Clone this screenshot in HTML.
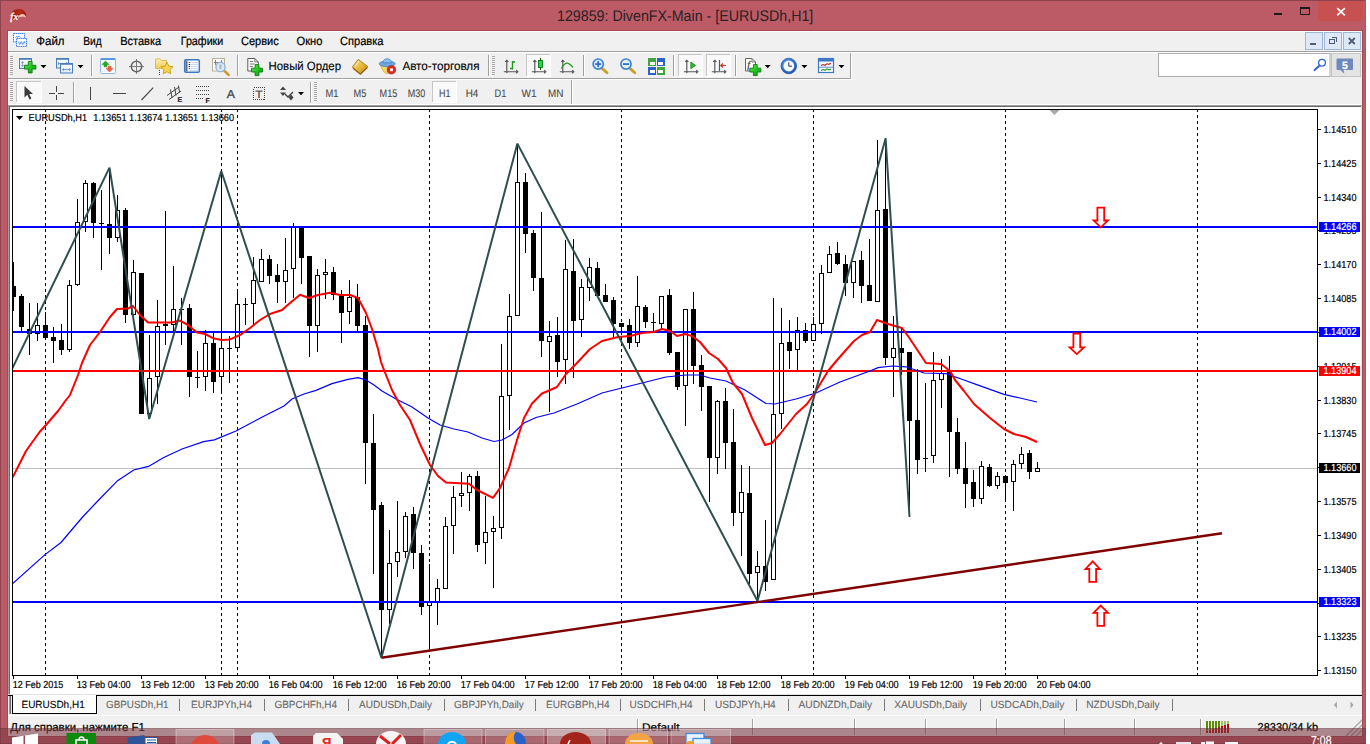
<!DOCTYPE html>
<html lang="ru"><head><meta charset="utf-8"><title>129859: DivenFX-Main - [EURUSDh,H1]</title>
<style>html,body{margin:0;padding:0;background:#fff;overflow:hidden}body{width:1370px;height:744px}svg{display:block;text-rendering:geometricPrecision;font-family:'Liberation Sans', sans-serif}</style>
</head><body>
<svg width="1370" height="744" viewBox="0 0 1370 744">
<rect x="0" y="0" width="1370" height="744" fill="#fff" />
<g id="window-frame" shape-rendering="crispEdges">
<rect x="0" y="0" width="1366" height="744" fill="#BC5A65" />
<rect x="0" y="0" width="1366" height="1" fill="#8F434D" />
<rect x="0" y="0" width="1" height="744" fill="#8F434D" />
<rect x="1365" y="0" width="1" height="744" fill="#B8505D" />
<rect x="7" y="30" width="1356" height="707" fill="#A64853" />
<rect x="8" y="31" width="1354" height="705" fill="#F0F0F0" />
<rect x="8" y="31" width="1354" height="1" fill="#fff" />
<rect x="8" y="31" width="1" height="20" fill="#fff" />
<rect x="1318" y="1" width="45" height="20" fill="#C75050" />
</g>
<g id="caption-buttons">
<rect x="1274" y="13" width="8" height="2" fill="#1a1a1a" shape-rendering="crispEdges"/>
<path d="M1300.5 8.5h9v6h-9z" fill="none" stroke="#1a1a1a" stroke-width="1"/>
<rect x="1300" y="7" width="10" height="2" fill="#1a1a1a" shape-rendering="crispEdges"/>
<path d="M1337.2 8.2l7.6 7.2M1344.8 8.2l-7.6 7.2" stroke="#fff" stroke-width="1.7" fill="none"/>
</g>
<text x="557" y="21" font-size="15.4" fill="#2a2226" text-anchor="start" font-weight="normal" textLength="256.3" lengthAdjust="spacingAndGlyphs" stroke="none">129859: DivenFX-Main - [EURUSDh,H1]</text>
<g id="app-icon">
<defs><radialGradient id="gapp" cx="0.55" cy="0.3" r="0.8"><stop offset="0" stop-color="#B8301C"/><stop offset="1" stop-color="#7E130D"/></radialGradient></defs>
<path d="M11.500 19.500C9.500 13.500 13.500 9 18.800 8.900C24 8.800 27.300 13 26 18C23.500 16 19.800 16.300 17 18.500C15 20 12.500 20.800 11.500 19.500Z" fill="url(#gapp)"/>
<path d="M18 16.800C20.500 13 25.600 13 26.200 18.200C24 16.400 21 16.400 18 18Z" fill="#F6D2CC" fill-opacity="0.900"/>
<text x="10.2" y="19.8" font-size="10.5" fill="#fff" text-anchor="start" font-weight="bold" textLength="8" lengthAdjust="spacingAndGlyphs" font-style="italic" font-family='"Liberation Serif", serif' stroke="#fff" stroke-width="0.2">fx</text>
</g>
<g id="menubar">
<g id="mdi-icon">
<rect x="13.5" y="33.5" width="11" height="8.5" fill="#fff" stroke="#3F86F0" stroke-width="1" stroke-dasharray="1.500 0.500"/>
<path d="M15.500 37.500l1.500-1.500M17 37.500l2-1.500 1.500 1.500" stroke="#3F86F0" stroke-width="0.900" fill="none"/>
<rect x="16.5" y="38.5" width="10" height="8" fill="#fff" stroke="#3F86F0" stroke-width="1" stroke-dasharray="1.500 0.500"/>
<path d="M18.500 41.500l1.200 3 1.500-3 1.500 3 1.500-3 .8 2" stroke="#3F86F0" stroke-width="0.900" fill="none"/>
</g>
<text x="36.3" y="45" font-size="12" fill="#000" text-anchor="start" font-weight="normal" textLength="28.2" lengthAdjust="spacingAndGlyphs"  stroke="#000" stroke-width="0.22">Файл</text>
<text x="83.3" y="45" font-size="12" fill="#000" text-anchor="start" font-weight="normal" textLength="18.4" lengthAdjust="spacingAndGlyphs"  stroke="#000" stroke-width="0.22">Вид</text>
<text x="120.2" y="45" font-size="12" fill="#000" text-anchor="start" font-weight="normal" textLength="41.0" lengthAdjust="spacingAndGlyphs"  stroke="#000" stroke-width="0.22">Вставка</text>
<text x="180.7" y="45" font-size="12" fill="#000" text-anchor="start" font-weight="normal" textLength="42.6" lengthAdjust="spacingAndGlyphs"  stroke="#000" stroke-width="0.22">Графики</text>
<text x="241" y="45" font-size="12" fill="#000" text-anchor="start" font-weight="normal" textLength="37.7" lengthAdjust="spacingAndGlyphs"  stroke="#000" stroke-width="0.22">Сервис</text>
<text x="296.5" y="45" font-size="12" fill="#000" text-anchor="start" font-weight="normal" textLength="25.9" lengthAdjust="spacingAndGlyphs"  stroke="#000" stroke-width="0.22">Окно</text>
<text x="340" y="45" font-size="12" fill="#000" text-anchor="start" font-weight="normal" textLength="43.5" lengthAdjust="spacingAndGlyphs"  stroke="#000" stroke-width="0.22">Справка</text>
<rect x="1305.5" y="32.5" width="17" height="17" fill="#DDE9F7" stroke="#9FB7D3" stroke-width="1"/>
<rect x="1324.5" y="32.5" width="17" height="17" fill="#DDE9F7" stroke="#9FB7D3" stroke-width="1"/>
<rect x="1343.5" y="32.5" width="17" height="17" fill="#DDE9F7" stroke="#9FB7D3" stroke-width="1"/>
<rect x="1310" y="43" width="6" height="2" fill="#4E5D73" shape-rendering="crispEdges"/>
<path d="M1331.5 37.5h5v4M1329.5 39.5h5v4h-5z" stroke="#4E5D73" stroke-width="1.4" fill="none" shape-rendering="crispEdges"/>
<path d="M1348.8 38l6 6M1354.8 38l-6 6" stroke="#4E5D73" stroke-width="1.8" fill="none"/>
</g>
<defs>
<linearGradient id="gplus" x1="0" y1="0" x2="1" y2="1"><stop offset="0" stop-color="#7BEA6A"/><stop offset="0.5" stop-color="#22C422"/><stop offset="1" stop-color="#0E9A12"/></linearGradient>
<linearGradient id="gfold" x1="0" y1="0" x2="0" y2="1"><stop offset="0" stop-color="#FDF0B4"/><stop offset="1" stop-color="#F0CB55"/></linearGradient>
<linearGradient id="gbook" x1="0" y1="0" x2="1" y2="1"><stop offset="0" stop-color="#F7DE8A"/><stop offset="0.5" stop-color="#E9B93B"/><stop offset="1" stop-color="#B98616"/></linearGradient>
<radialGradient id="gclock" cx="0.4" cy="0.35" r="0.7"><stop offset="0" stop-color="#5BA0F0"/><stop offset="1" stop-color="#1B55B5"/></radialGradient>
<linearGradient id="gwin" x1="0" y1="0" x2="0" y2="1"><stop offset="0" stop-color="#FFFFFF"/><stop offset="1" stop-color="#DCE8F8"/></linearGradient>
</defs>
<g id="toolbars">
<g shape-rendering="crispEdges">
<rect x="8" y="51" width="1354" height="1" fill="#A0A0A0" />
<rect x="8" y="52" width="1354" height="1" fill="#fff" />
<rect x="8" y="78" width="843" height="1" fill="#A0A0A0" />
<rect x="8" y="79" width="844" height="1" fill="#fff" />
<rect x="850" y="53" width="1" height="26" fill="#A0A0A0" />
<rect x="851" y="53" width="1" height="26" fill="#fff" />
<rect x="571" y="80" width="1" height="25" fill="#A0A0A0" />
<rect x="572" y="80" width="1" height="25" fill="#fff" />
</g>
<g shape-rendering="crispEdges"><rect x="10" y="56" width="3" height="1" fill="#A8A8A8" /><rect x="10" y="58" width="3" height="1" fill="#A8A8A8" /><rect x="10" y="60" width="3" height="1" fill="#A8A8A8" /><rect x="10" y="62" width="3" height="1" fill="#A8A8A8" /><rect x="10" y="64" width="3" height="1" fill="#A8A8A8" /><rect x="10" y="66" width="3" height="1" fill="#A8A8A8" /><rect x="10" y="68" width="3" height="1" fill="#A8A8A8" /><rect x="10" y="70" width="3" height="1" fill="#A8A8A8" /><rect x="10" y="72" width="3" height="1" fill="#A8A8A8" /><rect x="10" y="74" width="3" height="1" fill="#A8A8A8" /></g>
<g id="ico-newchart">
<rect x="19.5" y="58.5" width="12" height="10" fill="url(#gwin)" stroke="#4A7EBB" stroke-width="1"/>
<rect x="19.5" y="58.2" width="12" height="1.6" fill="#4A7EBB" />
<path d="M22.500 61.500v5M21.200 63l1.300-1.500 1.300 1.500M21.200 65l1.300 1.500 1.300-1.500" stroke="#6E93C4" stroke-width="0.800" fill="none"/>
<path d="M28.3 61.5h3.8v3.8000000000000003h3.8000000000000003v3.8h-3.8000000000000003v3.8000000000000003h-3.8v-3.8000000000000003h-3.8000000000000003v-3.8h3.8000000000000003z" fill="url(#gplus)" stroke="#0A7D0A" stroke-width="0.9" stroke-linejoin="round"/>
</g>
<path d="M40.5 65h6l-3 3.2z" fill="#000"/>
<g id="ico-profiles">
<rect x="56.5" y="58.5" width="12" height="9.5" fill="url(#gwin)" stroke="#4A7EBB" stroke-width="1"/>
<rect x="56.5" y="58.2" width="12" height="1.6" fill="#4A7EBB" />
<path d="M58.500 63.500h8M58.500 62v3M66.500 62v3" stroke="#6E93C4" stroke-width="0.900"/>
<rect x="60.5" y="63.5" width="12" height="9.5" fill="url(#gwin)" stroke="#4A7EBB" stroke-width="1"/>
<rect x="60.5" y="63.2" width="12" height="1.6" fill="#4A7EBB" />
<path d="M62.500 69.500h8M63.800 68.200l-1.300 1.300 1.300 1.300M69.200 68.200l1.300 1.300-1.300 1.300" stroke="#6E93C4" stroke-width="0.900" fill="none"/>
</g>
<path d="M77.5 65h6l-3 3.2z" fill="#000"/>
<g shape-rendering="crispEdges"><rect x="91" y="55" width="1" height="21" fill="#A0A0A0" /><rect x="92" y="55" width="1" height="21" fill="#fff" /></g>
<g id="ico-market">
<rect x="100.5" y="58.5" width="15" height="15" fill="#FDFEFF" stroke="#8DB8EA" stroke-width="1" rx="1.2"/>
<rect x="100.5" y="58.2" width="15" height="1.7" fill="#4F93E0" rx="0.8"/>
<path d="M109 62.500h5M109 65h5M102 69h4M102 71.500h4" stroke="#D5DCE6" stroke-width="0.800" stroke-dasharray="1 1"/>
<path d="M105.500 61l3.600 3.600h-2.100v2.200h-3v-2.200h-2.100z" fill="#22B022" stroke="#128212" stroke-width="0.500"/>
<path d="M109.600 72l3.600-3.600h-2.100v-2.200h-3v2.200h-2.100z" fill="#F0643C" stroke="#C8401E" stroke-width="0.500"/>
</g>
<g id="ico-cross" fill="none">
<path d="M136.500 59v15M129 66.500h15" stroke="#7b7b7b" stroke-width="1" shape-rendering="crispEdges"/>
<circle cx="136.500" cy="66.500" r="5.200" stroke="#666" stroke-width="1.500"/>
</g>
<g id="ico-navigator">
<path d="M155.500 60a1.200 1.200 0 0 1 1.200-1.200h3.300l1.500 1.700h5v8h-11z" fill="url(#gfold)" stroke="#D8B446" stroke-width="0.900"/>
<path d="M159.500 69.500v5" stroke="#444" stroke-width="1" stroke-dasharray="1 1" shape-rendering="crispEdges"/>
<path d="M167 62.300l1.900 3.900 4.200.500-3.100 2.900.8 4.200-3.800-2.100-3.800 2.100.8-4.200-3.100-2.900 4.200-.500z" fill="#F6D64E" stroke="#C79A1A" stroke-width="0.900" stroke-linejoin="round"/>
</g>
<g id="ico-terminal">
<rect x="184.7" y="59.7" width="14.6" height="12.6" fill="#fff" stroke="#3A78C3" stroke-width="1.500" rx="1.300"/>
<rect x="185.5" y="60.5" width="2" height="11" fill="#5A6E8C" />
<path d="M189.500 62.500h9M189.500 64.500h9M189.500 66.500h9M189.500 68.500h9M189.500 70.500h9" stroke="#B9D0F0" stroke-width="0.800"/>
<path d="M188.700 62.500h1.300M188.700 68.500h1.300" stroke="#E02020" stroke-width="1.100"/>
<path d="M188.700 64.500h1.300M188.700 66.500h1.300" stroke="#222" stroke-width="1.100"/>
</g>
<g id="ico-tester">
<rect x="212.5" y="58.5" width="12" height="12.5" fill="#FBFAF6" stroke="#B9B19A" stroke-width="1"/>
<path d="M215.500 60v5M221.500 60v5M214 62.500h9" stroke="#777" stroke-width="0.900"/>
<path d="M224.500 71l4.300 4" stroke="#C89B2B" stroke-width="2.400" stroke-linecap="round"/>
<circle cx="220.500" cy="67" r="4.600" fill="#D9E8F8" fill-opacity="0.9" stroke="#8FB4E0" stroke-width="1.400"/>
<rect x="219.3" y="64.5" width="2.2" height="4.5" fill="#A9B7C6" />
</g>
<g shape-rendering="crispEdges"><rect x="237" y="55" width="1" height="21" fill="#A0A0A0" /><rect x="238" y="55" width="1" height="21" fill="#fff" /></g>
<g id="ico-neworder">
<path d="M247.800 58.500h7l3.500 3.500v9h-10.500z" fill="#fff" stroke="#5a5a5a" stroke-width="1"/>
<path d="M254.800 58.500v3.500h3.500" fill="none" stroke="#5a5a5a" stroke-width="0.800"/>
<path d="M249.800 61.500h3.500M249.800 64h5M249.800 66.500h3" stroke="#777" stroke-width="1"/>
<path d="M255.1 64.6h3.8v3.6h3.6v3.8h-3.6v3.6h-3.8v-3.6h-3.6v-3.8h3.6z" fill="url(#gplus)" stroke="#0A7D0A" stroke-width="0.9" stroke-linejoin="round"/>
</g>
<text x="268.6" y="70.2" font-size="12" fill="#000" text-anchor="start" font-weight="normal" textLength="72.4" lengthAdjust="spacingAndGlyphs" stroke="#000" stroke-width="0.12">Новый Ордер</text>
<g id="ico-book">
<path d="M352.200 67.200l6-7.800 9.700 7.200-7.600 7.200z" fill="url(#gbook)" stroke="#A87B16" stroke-width="0.900" stroke-linejoin="round"/>
<path d="M353 68.300l7.400 6 7-6.800" fill="none" stroke="#8C6410" stroke-width="1.200"/>
<path d="M355 66.500l4-5" stroke="#FBEFC0" stroke-width="1.200"/>
</g>
<g id="ico-autotrade">
<path d="M380.500 65.500c2 5 4 8 6.500 8s4.500-3 6.500-8z" fill="#F6D662" stroke="#D0A92E" stroke-width="0.800"/>
<ellipse cx="387.200" cy="63.800" rx="8" ry="2.900" fill="#6FA8DF" stroke="#4884C4" stroke-width="0.800"/>
<path d="M382.800 62.800c.5-5.500 8.300-5.500 8.800 0z" fill="#8CC0EE" stroke="#4884C4" stroke-width="0.800"/>
<circle cx="391.500" cy="69.800" r="4.100" fill="#E22B1E" stroke="#A8150C" stroke-width="0.700"/>
<rect x="390.1" y="68.4" width="2.8" height="2.8" fill="#fff" />
</g>
<text x="402.4" y="70.2" font-size="12" fill="#000" text-anchor="start" font-weight="normal" textLength="77.1" lengthAdjust="spacingAndGlyphs" stroke="#000" stroke-width="0.12">Авто-торговля</text>
<g shape-rendering="crispEdges"><rect x="488" y="55" width="1" height="21" fill="#A0A0A0" /><rect x="489" y="55" width="1" height="21" fill="#fff" /></g>
<g shape-rendering="crispEdges"><rect x="492" y="56" width="3" height="1" fill="#A8A8A8" /><rect x="492" y="58" width="3" height="1" fill="#A8A8A8" /><rect x="492" y="60" width="3" height="1" fill="#A8A8A8" /><rect x="492" y="62" width="3" height="1" fill="#A8A8A8" /><rect x="492" y="64" width="3" height="1" fill="#A8A8A8" /><rect x="492" y="66" width="3" height="1" fill="#A8A8A8" /><rect x="492" y="68" width="3" height="1" fill="#A8A8A8" /><rect x="492" y="70" width="3" height="1" fill="#A8A8A8" /><rect x="492" y="72" width="3" height="1" fill="#A8A8A8" /><rect x="492" y="74" width="3" height="1" fill="#A8A8A8" /></g>
<path d="M506.8 60.2V73.3M503.8 71.7H517.8M505.2 61.8L506.8 60.2L508.40000000000003 61.8M516.2 70.10000000000001L517.8 71.7L516.2 73.3" stroke="#555" stroke-width="1.15" fill="none"/>
<path d="M512.500 61v8.500M512.500 62h2.500M510 68.500h2.500" stroke="#1F9A1F" stroke-width="1.400" fill="none"/>
<g shape-rendering="crispEdges"><rect x="526" y="54" width="25" height="23" fill="#F9F9F9"/><rect x="526" y="54" width="25" height="1" fill="#C6C6C6"/><rect x="526" y="54" width="1" height="23" fill="#C6C6C6"/><rect x="526" y="76" width="25" height="1" fill="#fff"/><rect x="550" y="54" width="1" height="23" fill="#fff"/></g>
<path d="M534.8 60.2V73.3M531.8 71.7H545.8M533.1999999999999 61.8L534.8 60.2L536.4 61.8M544.2 70.10000000000001L545.8 71.7L544.2 73.3" stroke="#555" stroke-width="1.15" fill="none"/>
<path d="M540.500 58v12" stroke="#0d5f0d" stroke-width="1.100"/>
<rect x="538.5" y="60.5" width="4" height="7" fill="#2ED053" stroke="#0B7A0B" stroke-width="0.900"/>
<path d="M562.8 60.2V73.3M559.8 71.7H573.8M561.1999999999999 61.8L562.8 60.2L564.4 61.8M572.2 70.10000000000001L573.8 71.7L572.2 73.3" stroke="#555" stroke-width="1.15" fill="none"/>
<path d="M561.300 68.500c2.200-3.800 4.200-5.300 5.900-5.300s3.400 1.700 5.700 4" stroke="#1F9A1F" stroke-width="1.300" fill="none"/>
<g shape-rendering="crispEdges"><rect x="583" y="55" width="1" height="21" fill="#A0A0A0" /><rect x="584" y="55" width="1" height="21" fill="#fff" /></g>
<g><path d="M602.4000000000001 68.600l4.600 4.200" stroke="#C9A02C" stroke-width="2.800" stroke-linecap="round"/>
<circle cx="598.2" cy="64.100" r="5.100" fill="#E1EEFB" stroke="#3B82D6" stroke-width="1.700"/>
<path d="M595.2 64.100h6" stroke="#2F6FCB" stroke-width="1.800"/>
<path d="M598.2 61.100v6" stroke="#2F6FCB" stroke-width="1.800"/>
</g>
<g><path d="M630.2 68.600l4.600 4.200" stroke="#C9A02C" stroke-width="2.800" stroke-linecap="round"/>
<circle cx="626" cy="64.100" r="5.100" fill="#E1EEFB" stroke="#3B82D6" stroke-width="1.700"/>
<path d="M623 64.100h6" stroke="#2F6FCB" stroke-width="1.800"/>
</g>
<g id="ico-tile" shape-rendering="crispEdges">
<rect x="648" y="58" width="8" height="8" fill="#3FA53F" />
<rect x="656.5" y="58" width="8" height="8" fill="#2E62C9" />
<rect x="648" y="66.5" width="8" height="8" fill="#2E62C9" />
<rect x="656.5" y="66.5" width="8" height="8" fill="#3FA53F" />
<rect x="649.5" y="61.5" width="5" height="3" fill="#fff" />
<rect x="658" y="61.5" width="5" height="3" fill="#fff" />
<rect x="649.5" y="70" width="5" height="3" fill="#fff" />
<rect x="658" y="70" width="5" height="3" fill="#fff" />
</g>
<g shape-rendering="crispEdges"><rect x="673" y="55" width="1" height="21" fill="#A0A0A0" /><rect x="674" y="55" width="1" height="21" fill="#fff" /></g>
<g shape-rendering="crispEdges"><rect x="678" y="54" width="25" height="23" fill="#F9F9F9"/><rect x="678" y="54" width="25" height="1" fill="#C6C6C6"/><rect x="678" y="54" width="1" height="23" fill="#C6C6C6"/><rect x="678" y="76" width="25" height="1" fill="#fff"/><rect x="702" y="54" width="1" height="23" fill="#fff"/></g>
<path d="M686.8 60.2V73.3M683.8 71.7H697.8M685.1999999999999 61.8L686.8 60.2L688.4 61.8M696.2 70.10000000000001L697.8 71.7L696.2 73.3" stroke="#555" stroke-width="1.15" fill="none"/>
<path d="M690.800 62l4.800 3.400-4.800 3.400z" fill="#2DBE2D" stroke="#0B7A0B" stroke-width="0.700"/>
<g shape-rendering="crispEdges"><rect x="706" y="54" width="25" height="23" fill="#F9F9F9"/><rect x="706" y="54" width="25" height="1" fill="#C6C6C6"/><rect x="706" y="54" width="1" height="23" fill="#C6C6C6"/><rect x="706" y="76" width="25" height="1" fill="#fff"/><rect x="730" y="54" width="1" height="23" fill="#fff"/></g>
<path d="M714.8 60.2V73.3M711.8 71.7H725.8M713.1999999999999 61.8L714.8 60.2L716.4 61.8M724.2 70.10000000000001L725.8 71.7L724.2 73.3" stroke="#555" stroke-width="1.15" fill="none"/>
<path d="M719.500 60v11" stroke="#2C5FA8" stroke-width="1.200"/>
<path d="M726 65.500h-5M723 63.500l-2.200 2 2.200 2" stroke="#C23A1A" stroke-width="1.200" fill="none"/>
<g shape-rendering="crispEdges"><rect x="735" y="55" width="1" height="21" fill="#A0A0A0" /><rect x="736" y="55" width="1" height="21" fill="#fff" /></g>
<g id="ico-ind">
<path d="M745.500 58.500h6.500l3.500 3.500v9h-10z" fill="#fff" stroke="#666" stroke-width="1"/>
<path d="M752 58.500v3.500h3.500" fill="none" stroke="#666" stroke-width="0.800"/>
<text x="747.3" y="68" font-size="10" fill="#333" text-anchor="start" font-weight="normal" font-style="italic" font-family='"Liberation Serif", serif' stroke="#333" stroke-width="0.2">f</text>
<path d="M753.4 64.6h3.8v3.6h3.6v3.8h-3.6v3.6h-3.8v-3.6h-3.6v-3.8h3.6z" fill="url(#gplus)" stroke="#0A7D0A" stroke-width="0.9" stroke-linejoin="round"/>
</g>
<path d="M764.7 65h6l-3 3.2z" fill="#000"/>
<g id="ico-clock">
<circle cx="788.800" cy="66" r="7.800" fill="url(#gclock)" stroke="#1C4F9C" stroke-width="0.700"/>
<circle cx="788.800" cy="66" r="5.400" fill="#F6FAFF"/>
<path d="M788.800 62.300v3.900h3.200" stroke="#333" stroke-width="1" fill="none"/>
</g>
<path d="M801.4 65h6l-3 3.2z" fill="#000"/>
<g id="ico-tpl">
<rect x="818.5" y="58.5" width="15" height="14" fill="#F7FAFE" stroke="#3C78C8" stroke-width="1.200"/>
<rect x="819" y="59" width="14" height="2.5" fill="#3C78C8" />
<path d="M821 65.500l2-1 2 .8 2-1.500 2 .5 2-1.200" stroke="#B3261B" stroke-width="1.100" fill="none"/>
<path d="M821 70.500l2-1 2 .8 2-1.500 2 1 2-.8" stroke="#1F9A1F" stroke-width="1.100" fill="none"/>
<path d="M819 67.200h14" stroke="#3C78C8" stroke-width="0.800"/>
</g>
<path d="M838.4 65h6l-3 3.2z" fill="#000"/>
<rect x="1158.5" y="53.5" width="171.5" height="23" fill="#fff" stroke="#ABADB3" stroke-width="1"/>
<circle cx="1322" cy="62.800" r="3.400" fill="#fff" stroke="#2F66C8" stroke-width="1.300"/>
<path d="M1319.600 65.500l-5 4.600" stroke="#2F66C8" stroke-width="2" stroke-linecap="round"/>
<rect x="1331.5" y="53.5" width="29" height="23" fill="#E4E4E4" stroke="#C4C4C4" stroke-width="1"/>
<path d="M1337.500 58.500h14.500a1 1 0 0 1 1 1v9.500a1 1 0 0 1-1 1h-8.500l.8 3.800-4-3.800h-2.800a1 1 0 0 1-1-1v-9.500a1 1 0 0 1 1-1z" fill="#6F89BA"/>
<text x="1345" y="68.5" font-size="10.5" fill="#fff" text-anchor="middle" font-weight="bold"  stroke="#fff" stroke-width="0.2">5</text>
<g shape-rendering="crispEdges"><rect x="10" y="82" width="3" height="1" fill="#A8A8A8" /><rect x="10" y="84" width="3" height="1" fill="#A8A8A8" /><rect x="10" y="86" width="3" height="1" fill="#A8A8A8" /><rect x="10" y="88" width="3" height="1" fill="#A8A8A8" /><rect x="10" y="90" width="3" height="1" fill="#A8A8A8" /><rect x="10" y="92" width="3" height="1" fill="#A8A8A8" /><rect x="10" y="94" width="3" height="1" fill="#A8A8A8" /><rect x="10" y="96" width="3" height="1" fill="#A8A8A8" /><rect x="10" y="98" width="3" height="1" fill="#A8A8A8" /><rect x="10" y="100" width="3" height="1" fill="#A8A8A8" /></g>
<g shape-rendering="crispEdges"><rect x="16" y="81" width="26" height="22" fill="#F9F9F9"/><rect x="16" y="81" width="26" height="1" fill="#C6C6C6"/><rect x="16" y="81" width="1" height="22" fill="#C6C6C6"/><rect x="16" y="102" width="26" height="1" fill="#fff"/><rect x="41" y="81" width="1" height="22" fill="#fff"/></g>
<path d="M24.500 86v11.500l2.800-2.700 2.200 4.700 1.900-.9-2.200-4.600h3.800z" fill="#3b3b3b"/>
<path d="M56.500 86v14M49 93.500h15" stroke="#444" stroke-width="1" shape-rendering="crispEdges"/>
<rect x="55" y="92" width="3" height="3" fill="#F0F0F0" />
<g shape-rendering="crispEdges"><rect x="73" y="82" width="1" height="21" fill="#A0A0A0" /><rect x="74" y="82" width="1" height="21" fill="#fff" /></g>
<rect x="90" y="87" width="1" height="13" fill="#444" shape-rendering="crispEdges"/>
<rect x="113" y="93" width="13" height="1" fill="#444" shape-rendering="crispEdges"/>
<path d="M141.500 100l11.700-12.300" stroke="#444" stroke-width="1.100"/>
<path d="M167 95.500l12-8.500M169 99.500l12-8.500M170.500 89.500l1.500 8.500M174.500 87l1.500 8.500M178.500 85.500l1 7" stroke="#444" stroke-width="1" fill="none"/>
<text x="177.6" y="102" font-size="7" fill="#222" text-anchor="start" font-weight="bold"  stroke="#222" stroke-width="0.2">E</text>
<g shape-rendering="crispEdges" stroke="#444" stroke-width="1" stroke-dasharray="1 1">
<line x1="196" y1="86.5" x2="209" y2="86.5"/>
<line x1="196" y1="90.5" x2="209" y2="90.5"/>
<line x1="196" y1="94.5" x2="209" y2="94.5"/>
<line x1="196" y1="98.5" x2="204" y2="98.5"/>
</g>
<text x="205.5" y="102.5" font-size="7" fill="#222" text-anchor="start" font-weight="bold"  stroke="#222" stroke-width="0.2">F</text>
<text x="226.8" y="97.8" font-size="11.5" fill="#4a4a4a" text-anchor="start" font-weight="normal" textLength="8.2" lengthAdjust="spacingAndGlyphs" stroke="#4a4a4a" stroke-width="0.300">A</text>
<rect x="253.5" y="87.5" width="11" height="12" fill="none" stroke="#444" stroke-width="1" stroke-dasharray="1 1" shape-rendering="crispEdges"/>
<text x="255.3" y="97.5" font-size="10.5" fill="#4a4a4a" text-anchor="start" font-weight="normal" textLength="7.4" lengthAdjust="spacingAndGlyphs"  stroke="#4a4a4a" stroke-width="0.2">T</text>
<path d="M283 86.500l3 3.500h-6zM283 96l-3-3.500h6z" fill="#444"/>
<path d="M285 94l3 3 5-5" stroke="#444" stroke-width="1.400" fill="none"/>
<path d="M291 94.500l2.500 3-2.500 3-2.500-3z" fill="#444"/>
<path d="M298 92h6l-3 3.2z" fill="#000"/>
<g shape-rendering="crispEdges"><rect x="310" y="82" width="1" height="21" fill="#A0A0A0" /><rect x="311" y="82" width="1" height="21" fill="#fff" /></g>
<g shape-rendering="crispEdges"><rect x="314" y="82" width="3" height="1" fill="#A8A8A8" /><rect x="314" y="84" width="3" height="1" fill="#A8A8A8" /><rect x="314" y="86" width="3" height="1" fill="#A8A8A8" /><rect x="314" y="88" width="3" height="1" fill="#A8A8A8" /><rect x="314" y="90" width="3" height="1" fill="#A8A8A8" /><rect x="314" y="92" width="3" height="1" fill="#A8A8A8" /><rect x="314" y="94" width="3" height="1" fill="#A8A8A8" /><rect x="314" y="96" width="3" height="1" fill="#A8A8A8" /><rect x="314" y="98" width="3" height="1" fill="#A8A8A8" /><rect x="314" y="100" width="3" height="1" fill="#A8A8A8" /></g>
<g shape-rendering="crispEdges"><rect x="432" y="81" width="25" height="22" fill="#F9F9F9"/><rect x="432" y="81" width="25" height="1" fill="#C6C6C6"/><rect x="432" y="81" width="1" height="22" fill="#C6C6C6"/><rect x="432" y="102" width="25" height="1" fill="#fff"/><rect x="456" y="81" width="1" height="22" fill="#fff"/></g>
<text x="325.6" y="97" font-size="11" fill="#4a4a4a" text-anchor="start" font-weight="normal" textLength="12.9" lengthAdjust="spacingAndGlyphs" stroke="#4a4a4a" stroke-width="0.1">M1</text>
<text x="353.6" y="97" font-size="11" fill="#4a4a4a" text-anchor="start" font-weight="normal" textLength="12.8" lengthAdjust="spacingAndGlyphs" stroke="#4a4a4a" stroke-width="0.1">M5</text>
<text x="379.6" y="97" font-size="11" fill="#4a4a4a" text-anchor="start" font-weight="normal" textLength="17.7" lengthAdjust="spacingAndGlyphs" stroke="#4a4a4a" stroke-width="0.1">M15</text>
<text x="407.7" y="97" font-size="11" fill="#4a4a4a" text-anchor="start" font-weight="normal" textLength="17.5" lengthAdjust="spacingAndGlyphs" stroke="#4a4a4a" stroke-width="0.1">M30</text>
<text x="439" y="97" font-size="11" fill="#4a4a4a" text-anchor="start" font-weight="normal" textLength="11.4" lengthAdjust="spacingAndGlyphs" stroke="#4a4a4a" stroke-width="0.1">H1</text>
<text x="465.7" y="97" font-size="11" fill="#4a4a4a" text-anchor="start" font-weight="normal" textLength="12.6" lengthAdjust="spacingAndGlyphs" stroke="#4a4a4a" stroke-width="0.1">H4</text>
<text x="494.6" y="97" font-size="11" fill="#4a4a4a" text-anchor="start" font-weight="normal" textLength="11.7" lengthAdjust="spacingAndGlyphs" stroke="#4a4a4a" stroke-width="0.1">D1</text>
<text x="521.5" y="97" font-size="11" fill="#4a4a4a" text-anchor="start" font-weight="normal" textLength="15.1" lengthAdjust="spacingAndGlyphs" stroke="#4a4a4a" stroke-width="0.1">W1</text>
<text x="548" y="97" font-size="11" fill="#4a4a4a" text-anchor="start" font-weight="normal" textLength="15.4" lengthAdjust="spacingAndGlyphs" stroke="#4a4a4a" stroke-width="0.1">MN</text>
</g>
<g id="chart">
<g shape-rendering="crispEdges">
<rect x="8" y="105" width="1354" height="590" fill="#fff" />
<rect x="8" y="104" width="1354" height="1" fill="#fff" />
<rect x="8" y="105" width="1354" height="1" fill="#A0A0A0" />
<rect x="9" y="106" width="1353" height="1" fill="#696969" />
<rect x="8" y="105" width="1" height="590" fill="#A0A0A0" />
<rect x="9" y="106" width="1" height="589" fill="#696969" />
<rect x="1361" y="106" width="1" height="589" fill="#E3E3E3" />
<rect x="12" y="109" width="1306" height="1" fill="#000" />
<rect x="12" y="675" width="1306" height="1" fill="#000" />
<rect x="12" y="109" width="1" height="567" fill="#000" />
<rect x="1317" y="109" width="1" height="567" fill="#000" />
</g>
<clipPath id="cc"><rect x="13" y="110" width="1304" height="565"/></clipPath>
<g clip-path="url(#cc)">
<g shape-rendering="crispEdges" stroke="#000" stroke-width="1" stroke-dasharray="3 3">
<line x1="45.5" y1="109" x2="45.5" y2="675"/>
<line x1="221.5" y1="109" x2="221.5" y2="675"/>
<line x1="237.5" y1="109" x2="237.5" y2="675"/>
<line x1="429.5" y1="109" x2="429.5" y2="675"/>
<line x1="621.5" y1="109" x2="621.5" y2="675"/>
<line x1="813.5" y1="109" x2="813.5" y2="675"/>
<line x1="1005.5" y1="109" x2="1005.5" y2="675"/>
<line x1="1197.5" y1="109" x2="1197.5" y2="675"/>
</g>
<rect x="13" y="468" width="1304" height="1" fill="#C0C0C0" shape-rendering="crispEdges"/>
<g shape-rendering="crispEdges">
<rect x="13" y="262" width="1" height="49" fill="#000" />
<rect x="11" y="286" width="5" height="11" fill="#000" />
<rect x="21" y="294" width="1" height="39" fill="#000" />
<rect x="19" y="296" width="5" height="31" fill="#000" />
<rect x="29" y="303" width="1" height="52" fill="#000" />
<rect x="27" y="329" width="5" height="5" fill="#000" />
<rect x="37" y="303" width="1" height="38" fill="#000" />
<rect x="35" y="325" width="5" height="9" fill="#000" />
<rect x="36" y="326" width="3" height="7" fill="#fff" />
<rect x="45" y="312" width="1" height="26" fill="#000" />
<rect x="43" y="325" width="5" height="13" fill="#000" />
<rect x="53" y="327" width="1" height="36" fill="#000" />
<rect x="51" y="337" width="5" height="4" fill="#000" />
<rect x="61" y="324" width="1" height="31" fill="#000" />
<rect x="59" y="340" width="5" height="10" fill="#000" />
<rect x="69" y="280" width="1" height="72" fill="#000" />
<rect x="67" y="285" width="5" height="65" fill="#000" />
<rect x="68" y="286" width="3" height="63" fill="#fff" />
<rect x="77" y="199" width="1" height="87" fill="#000" />
<rect x="75" y="222" width="5" height="63" fill="#000" />
<rect x="76" y="223" width="3" height="61" fill="#fff" />
<rect x="85" y="180" width="1" height="52" fill="#000" />
<rect x="83" y="183" width="5" height="39" fill="#000" />
<rect x="84" y="184" width="3" height="37" fill="#fff" />
<rect x="93" y="182" width="1" height="56" fill="#000" />
<rect x="91" y="183" width="5" height="40" fill="#000" />
<rect x="101" y="190" width="1" height="80" fill="#000" />
<rect x="99" y="223" width="5" height="1" fill="#000" />
<rect x="109" y="168" width="1" height="86" fill="#000" />
<rect x="107" y="224" width="5" height="14" fill="#000" />
<rect x="117" y="195" width="1" height="47" fill="#000" />
<rect x="115" y="210" width="5" height="28" fill="#000" />
<rect x="116" y="211" width="3" height="26" fill="#fff" />
<rect x="125" y="208" width="1" height="115" fill="#000" />
<rect x="123" y="210" width="5" height="105" fill="#000" />
<rect x="133" y="260" width="1" height="55" fill="#000" />
<rect x="131" y="272" width="5" height="43" fill="#000" />
<rect x="132" y="273" width="3" height="41" fill="#fff" />
<rect x="141" y="273" width="1" height="141" fill="#000" />
<rect x="139" y="273" width="5" height="141" fill="#000" />
<rect x="149" y="335" width="1" height="84" fill="#000" />
<rect x="147" y="378" width="5" height="36" fill="#000" />
<rect x="148" y="379" width="3" height="34" fill="#fff" />
<rect x="157" y="300" width="1" height="104" fill="#000" />
<rect x="155" y="326" width="5" height="51" fill="#000" />
<rect x="156" y="327" width="3" height="49" fill="#fff" />
<rect x="165" y="211" width="1" height="134" fill="#000" />
<rect x="163" y="324" width="5" height="2" fill="#000" />
<rect x="173" y="266" width="1" height="65" fill="#000" />
<rect x="171" y="309" width="5" height="16" fill="#000" />
<rect x="172" y="310" width="3" height="14" fill="#fff" />
<rect x="181" y="298" width="1" height="47" fill="#000" />
<rect x="179" y="309" width="5" height="1" fill="#000" />
<rect x="189" y="304" width="1" height="93" fill="#000" />
<rect x="187" y="308" width="5" height="69" fill="#000" />
<rect x="197" y="351" width="1" height="37" fill="#000" />
<rect x="195" y="377" width="5" height="1" fill="#000" />
<rect x="205" y="330" width="1" height="61" fill="#000" />
<rect x="203" y="343" width="5" height="34" fill="#000" />
<rect x="204" y="344" width="3" height="32" fill="#fff" />
<rect x="213" y="333" width="1" height="60" fill="#000" />
<rect x="211" y="343" width="5" height="39" fill="#000" />
<rect x="221" y="169" width="1" height="224" fill="#000" />
<rect x="219" y="348" width="5" height="29" fill="#000" />
<rect x="220" y="349" width="3" height="27" fill="#fff" />
<rect x="229" y="336" width="1" height="47" fill="#000" />
<rect x="227" y="348" width="5" height="1" fill="#000" />
<rect x="237" y="289" width="1" height="63" fill="#000" />
<rect x="235" y="304" width="5" height="44" fill="#000" />
<rect x="236" y="305" width="3" height="42" fill="#fff" />
<rect x="245" y="298" width="1" height="27" fill="#000" />
<rect x="243" y="304" width="5" height="1" fill="#000" />
<rect x="253" y="257" width="1" height="68" fill="#000" />
<rect x="251" y="280" width="5" height="24" fill="#000" />
<rect x="252" y="281" width="3" height="22" fill="#fff" />
<rect x="261" y="249" width="1" height="33" fill="#000" />
<rect x="259" y="259" width="5" height="23" fill="#000" />
<rect x="260" y="260" width="3" height="21" fill="#fff" />
<rect x="269" y="255" width="1" height="29" fill="#000" />
<rect x="267" y="259" width="5" height="17" fill="#000" />
<rect x="277" y="264" width="1" height="39" fill="#000" />
<rect x="275" y="275" width="5" height="7" fill="#000" />
<rect x="285" y="238" width="1" height="65" fill="#000" />
<rect x="283" y="270" width="5" height="12" fill="#000" />
<rect x="284" y="271" width="3" height="10" fill="#fff" />
<rect x="293" y="223" width="1" height="75" fill="#000" />
<rect x="291" y="226" width="5" height="43" fill="#000" />
<rect x="292" y="227" width="3" height="41" fill="#fff" />
<rect x="301" y="227" width="1" height="57" fill="#000" />
<rect x="299" y="227" width="5" height="31" fill="#000" />
<rect x="309" y="256" width="1" height="101" fill="#000" />
<rect x="307" y="256" width="5" height="70" fill="#000" />
<rect x="317" y="269" width="1" height="83" fill="#000" />
<rect x="315" y="275" width="5" height="51" fill="#000" />
<rect x="316" y="276" width="3" height="49" fill="#fff" />
<rect x="325" y="259" width="1" height="40" fill="#000" />
<rect x="323" y="272" width="5" height="3" fill="#000" />
<rect x="324" y="273" width="3" height="1" fill="#fff" />
<rect x="333" y="267" width="1" height="33" fill="#000" />
<rect x="331" y="272" width="5" height="23" fill="#000" />
<rect x="341" y="290" width="1" height="53" fill="#000" />
<rect x="339" y="295" width="5" height="18" fill="#000" />
<rect x="349" y="280" width="1" height="44" fill="#000" />
<rect x="347" y="297" width="5" height="15" fill="#000" />
<rect x="348" y="298" width="3" height="13" fill="#fff" />
<rect x="357" y="284" width="1" height="47" fill="#000" />
<rect x="355" y="297" width="5" height="29" fill="#000" />
<rect x="365" y="316" width="1" height="168" fill="#000" />
<rect x="363" y="325" width="5" height="118" fill="#000" />
<rect x="373" y="414" width="1" height="160" fill="#000" />
<rect x="371" y="443" width="5" height="67" fill="#000" />
<rect x="381" y="502" width="1" height="156" fill="#000" />
<rect x="379" y="505" width="5" height="105" fill="#000" />
<rect x="389" y="530" width="1" height="94" fill="#000" />
<rect x="387" y="563" width="5" height="47" fill="#000" />
<rect x="388" y="564" width="3" height="45" fill="#fff" />
<rect x="397" y="501" width="1" height="76" fill="#000" />
<rect x="395" y="552" width="5" height="10" fill="#000" />
<rect x="396" y="553" width="3" height="8" fill="#fff" />
<rect x="405" y="512" width="1" height="46" fill="#000" />
<rect x="403" y="516" width="5" height="36" fill="#000" />
<rect x="404" y="517" width="3" height="34" fill="#fff" />
<rect x="413" y="507" width="1" height="62" fill="#000" />
<rect x="411" y="514" width="5" height="39" fill="#000" />
<rect x="421" y="545" width="1" height="70" fill="#000" />
<rect x="419" y="553" width="5" height="54" fill="#000" />
<rect x="429" y="564" width="1" height="88" fill="#000" />
<rect x="427" y="601" width="5" height="5" fill="#000" />
<rect x="428" y="602" width="3" height="3" fill="#fff" />
<rect x="437" y="579" width="1" height="46" fill="#000" />
<rect x="435" y="588" width="5" height="14" fill="#000" />
<rect x="436" y="589" width="3" height="12" fill="#fff" />
<rect x="445" y="517" width="1" height="72" fill="#000" />
<rect x="443" y="526" width="5" height="63" fill="#000" />
<rect x="444" y="527" width="3" height="61" fill="#fff" />
<rect x="453" y="486" width="1" height="68" fill="#000" />
<rect x="451" y="497" width="5" height="29" fill="#000" />
<rect x="452" y="498" width="3" height="27" fill="#fff" />
<rect x="461" y="472" width="1" height="35" fill="#000" />
<rect x="459" y="493" width="5" height="3" fill="#000" />
<rect x="460" y="494" width="3" height="1" fill="#fff" />
<rect x="469" y="474" width="1" height="37" fill="#000" />
<rect x="467" y="476" width="5" height="17" fill="#000" />
<rect x="468" y="477" width="3" height="15" fill="#fff" />
<rect x="477" y="471" width="1" height="81" fill="#000" />
<rect x="475" y="476" width="5" height="69" fill="#000" />
<rect x="485" y="496" width="1" height="68" fill="#000" />
<rect x="483" y="532" width="5" height="11" fill="#000" />
<rect x="484" y="533" width="3" height="9" fill="#fff" />
<rect x="493" y="516" width="1" height="72" fill="#000" />
<rect x="491" y="528" width="5" height="4" fill="#000" />
<rect x="492" y="529" width="3" height="2" fill="#fff" />
<rect x="501" y="344" width="1" height="195" fill="#000" />
<rect x="499" y="396" width="5" height="132" fill="#000" />
<rect x="500" y="397" width="3" height="130" fill="#fff" />
<rect x="509" y="294" width="1" height="136" fill="#000" />
<rect x="507" y="316" width="5" height="80" fill="#000" />
<rect x="508" y="317" width="3" height="78" fill="#fff" />
<rect x="517" y="144" width="1" height="172" fill="#000" />
<rect x="515" y="182" width="5" height="134" fill="#000" />
<rect x="516" y="183" width="3" height="132" fill="#fff" />
<rect x="525" y="173" width="1" height="80" fill="#000" />
<rect x="523" y="182" width="5" height="52" fill="#000" />
<rect x="533" y="230" width="1" height="61" fill="#000" />
<rect x="531" y="233" width="5" height="45" fill="#000" />
<rect x="541" y="212" width="1" height="145" fill="#000" />
<rect x="539" y="278" width="5" height="63" fill="#000" />
<rect x="549" y="321" width="1" height="91" fill="#000" />
<rect x="547" y="336" width="5" height="6" fill="#000" />
<rect x="548" y="337" width="3" height="4" fill="#fff" />
<rect x="557" y="317" width="1" height="60" fill="#000" />
<rect x="555" y="335" width="5" height="27" fill="#000" />
<rect x="565" y="240" width="1" height="144" fill="#000" />
<rect x="563" y="269" width="5" height="91" fill="#000" />
<rect x="564" y="270" width="3" height="89" fill="#fff" />
<rect x="573" y="239" width="1" height="139" fill="#000" />
<rect x="571" y="271" width="5" height="50" fill="#000" />
<rect x="581" y="279" width="1" height="58" fill="#000" />
<rect x="579" y="287" width="5" height="33" fill="#000" />
<rect x="580" y="288" width="3" height="31" fill="#fff" />
<rect x="589" y="258" width="1" height="43" fill="#000" />
<rect x="587" y="267" width="5" height="21" fill="#000" />
<rect x="588" y="268" width="3" height="19" fill="#fff" />
<rect x="597" y="262" width="1" height="34" fill="#000" />
<rect x="595" y="268" width="5" height="28" fill="#000" />
<rect x="605" y="284" width="1" height="18" fill="#000" />
<rect x="603" y="295" width="5" height="7" fill="#000" />
<rect x="613" y="297" width="1" height="41" fill="#000" />
<rect x="611" y="300" width="5" height="24" fill="#000" />
<rect x="621" y="323" width="1" height="12" fill="#000" />
<rect x="619" y="323" width="5" height="4" fill="#000" />
<rect x="629" y="319" width="1" height="30" fill="#000" />
<rect x="627" y="325" width="5" height="18" fill="#000" />
<rect x="637" y="276" width="1" height="71" fill="#000" />
<rect x="635" y="306" width="5" height="37" fill="#000" />
<rect x="636" y="307" width="3" height="35" fill="#fff" />
<rect x="645" y="305" width="1" height="23" fill="#000" />
<rect x="643" y="307" width="5" height="15" fill="#000" />
<rect x="653" y="313" width="1" height="18" fill="#000" />
<rect x="651" y="322" width="5" height="1" fill="#000" />
<rect x="661" y="296" width="1" height="33" fill="#000" />
<rect x="659" y="296" width="5" height="28" fill="#000" />
<rect x="660" y="297" width="3" height="26" fill="#fff" />
<rect x="669" y="289" width="1" height="66" fill="#000" />
<rect x="667" y="295" width="5" height="58" fill="#000" />
<rect x="677" y="352" width="1" height="38" fill="#000" />
<rect x="675" y="352" width="5" height="35" fill="#000" />
<rect x="685" y="309" width="1" height="117" fill="#000" />
<rect x="683" y="309" width="5" height="77" fill="#000" />
<rect x="684" y="310" width="3" height="75" fill="#fff" />
<rect x="693" y="292" width="1" height="92" fill="#000" />
<rect x="691" y="309" width="5" height="57" fill="#000" />
<rect x="701" y="355" width="1" height="56" fill="#000" />
<rect x="699" y="365" width="5" height="22" fill="#000" />
<rect x="709" y="386" width="1" height="116" fill="#000" />
<rect x="707" y="386" width="5" height="72" fill="#000" />
<rect x="717" y="400" width="1" height="74" fill="#000" />
<rect x="715" y="401" width="5" height="57" fill="#000" />
<rect x="716" y="402" width="3" height="55" fill="#fff" />
<rect x="725" y="388" width="1" height="81" fill="#000" />
<rect x="723" y="401" width="5" height="42" fill="#000" />
<rect x="733" y="409" width="1" height="117" fill="#000" />
<rect x="731" y="442" width="5" height="71" fill="#000" />
<rect x="741" y="465" width="1" height="91" fill="#000" />
<rect x="739" y="492" width="5" height="21" fill="#000" />
<rect x="740" y="493" width="3" height="19" fill="#fff" />
<rect x="749" y="466" width="1" height="118" fill="#000" />
<rect x="747" y="493" width="5" height="81" fill="#000" />
<rect x="757" y="551" width="1" height="50" fill="#000" />
<rect x="755" y="566" width="5" height="7" fill="#000" />
<rect x="756" y="567" width="3" height="5" fill="#fff" />
<rect x="765" y="520" width="1" height="71" fill="#000" />
<rect x="763" y="566" width="5" height="16" fill="#000" />
<rect x="773" y="298" width="1" height="282" fill="#000" />
<rect x="771" y="414" width="5" height="166" fill="#000" />
<rect x="772" y="415" width="3" height="164" fill="#fff" />
<rect x="781" y="308" width="1" height="121" fill="#000" />
<rect x="779" y="343" width="5" height="71" fill="#000" />
<rect x="780" y="344" width="3" height="69" fill="#fff" />
<rect x="789" y="320" width="1" height="49" fill="#000" />
<rect x="787" y="342" width="5" height="9" fill="#000" />
<rect x="797" y="317" width="1" height="53" fill="#000" />
<rect x="795" y="330" width="5" height="20" fill="#000" />
<rect x="796" y="331" width="3" height="18" fill="#fff" />
<rect x="805" y="323" width="1" height="20" fill="#000" />
<rect x="803" y="330" width="5" height="11" fill="#000" />
<rect x="813" y="317" width="1" height="24" fill="#000" />
<rect x="811" y="324" width="5" height="17" fill="#000" />
<rect x="812" y="325" width="3" height="15" fill="#fff" />
<rect x="821" y="265" width="1" height="69" fill="#000" />
<rect x="819" y="273" width="5" height="51" fill="#000" />
<rect x="820" y="274" width="3" height="49" fill="#fff" />
<rect x="829" y="246" width="1" height="27" fill="#000" />
<rect x="827" y="254" width="5" height="19" fill="#000" />
<rect x="828" y="255" width="3" height="17" fill="#fff" />
<rect x="837" y="242" width="1" height="23" fill="#000" />
<rect x="835" y="253" width="5" height="11" fill="#000" />
<rect x="845" y="255" width="1" height="41" fill="#000" />
<rect x="843" y="264" width="5" height="19" fill="#000" />
<rect x="853" y="261" width="1" height="37" fill="#000" />
<rect x="851" y="261" width="5" height="22" fill="#000" />
<rect x="852" y="262" width="3" height="20" fill="#fff" />
<rect x="861" y="251" width="1" height="52" fill="#000" />
<rect x="859" y="260" width="5" height="26" fill="#000" />
<rect x="869" y="239" width="1" height="62" fill="#000" />
<rect x="867" y="285" width="5" height="16" fill="#000" />
<rect x="877" y="140" width="1" height="162" fill="#000" />
<rect x="875" y="210" width="5" height="92" fill="#000" />
<rect x="876" y="211" width="3" height="90" fill="#fff" />
<rect x="885" y="138" width="1" height="227" fill="#000" />
<rect x="883" y="209" width="5" height="149" fill="#000" />
<rect x="893" y="316" width="1" height="81" fill="#000" />
<rect x="891" y="348" width="5" height="10" fill="#000" />
<rect x="892" y="349" width="3" height="8" fill="#fff" />
<rect x="901" y="327" width="1" height="48" fill="#000" />
<rect x="899" y="348" width="5" height="5" fill="#000" />
<rect x="909" y="352" width="1" height="165" fill="#000" />
<rect x="907" y="352" width="5" height="69" fill="#000" />
<rect x="917" y="369" width="1" height="105" fill="#000" />
<rect x="915" y="420" width="5" height="40" fill="#000" />
<rect x="925" y="383" width="1" height="89" fill="#000" />
<rect x="923" y="458" width="5" height="1" fill="#000" />
<rect x="933" y="352" width="1" height="111" fill="#000" />
<rect x="931" y="380" width="5" height="76" fill="#000" />
<rect x="932" y="381" width="3" height="74" fill="#fff" />
<rect x="941" y="359" width="1" height="49" fill="#000" />
<rect x="939" y="373" width="5" height="7" fill="#000" />
<rect x="940" y="374" width="3" height="5" fill="#fff" />
<rect x="949" y="356" width="1" height="121" fill="#000" />
<rect x="947" y="370" width="5" height="62" fill="#000" />
<rect x="957" y="418" width="1" height="56" fill="#000" />
<rect x="955" y="432" width="5" height="37" fill="#000" />
<rect x="965" y="442" width="1" height="66" fill="#000" />
<rect x="963" y="468" width="5" height="16" fill="#000" />
<rect x="973" y="470" width="1" height="37" fill="#000" />
<rect x="971" y="482" width="5" height="17" fill="#000" />
<rect x="981" y="461" width="1" height="43" fill="#000" />
<rect x="979" y="466" width="5" height="33" fill="#000" />
<rect x="980" y="467" width="3" height="31" fill="#fff" />
<rect x="989" y="464" width="1" height="23" fill="#000" />
<rect x="987" y="467" width="5" height="19" fill="#000" />
<rect x="997" y="472" width="1" height="17" fill="#000" />
<rect x="995" y="476" width="5" height="10" fill="#000" />
<rect x="996" y="477" width="3" height="8" fill="#fff" />
<rect x="1005" y="476" width="1" height="26" fill="#000" />
<rect x="1003" y="476" width="5" height="7" fill="#000" />
<rect x="1013" y="460" width="1" height="51" fill="#000" />
<rect x="1011" y="464" width="5" height="18" fill="#000" />
<rect x="1012" y="465" width="3" height="16" fill="#fff" />
<rect x="1021" y="447" width="1" height="22" fill="#000" />
<rect x="1019" y="454" width="5" height="10" fill="#000" />
<rect x="1020" y="455" width="3" height="8" fill="#fff" />
<rect x="1029" y="450" width="1" height="29" fill="#000" />
<rect x="1027" y="453" width="5" height="19" fill="#000" />
<rect x="1037" y="462" width="1" height="10" fill="#000" />
<rect x="1035" y="468" width="5" height="4" fill="#000" />
<rect x="1036" y="469" width="3" height="2" fill="#fff" />
</g>
<g shape-rendering="crispEdges">
<rect x="13" y="226" width="1304" height="2" fill="#0000FF" />
<rect x="13" y="331" width="1304" height="2" fill="#0000FF" />
<rect x="13" y="601" width="1304" height="2" fill="#0000FF" />
<rect x="13" y="370" width="1304" height="2" fill="#FF0000" />
</g>
<polyline fill="none" stroke="#0000FF" stroke-width="1.2" points="12.7,583.6 45,554.6 61,542.5 82.6,517 98.7,500 117.6,480.7 133.7,470 148.5,466.4 163.3,457.8 182,449 203.6,441.7 214.4,439.8 236,431 262.8,416.7 284,406 292,399 304,394 316,390.4 332,383.6 348,379.4 358,377.6 366,380 374,385 382,391 396,399 412,407 428,418 440,425 454,429 468,432 482,438 494,441.5 502,440 512,434.5 524,423 536,417.5 554,413 577,404 602,393 626,387 646,382 666,377 686,375 700,375 710,378 726,381 745,390 766,403.5 775,404 796,399 816,393 840,382 870,371 878,367.6 892,366 906,366.8 924,373 946,373.6 964,380 976,384.4 1004,394.4 1020,398 1037,402"/>
<polyline fill="none" stroke="#FF0000" stroke-width="2" stroke-linejoin="round" points="12.7,477.4 26,451 31,444 39.6,432 46,425 58,411 66,400 70,395 78,375 82,363 90,345 100,332 110,317 117,309 128,308.6 133,306 140,315 148,322.4 172,322.4 180,320.6 188,325 197,332.6 205,334 214,338.6 222,340 230,339.4 240,335 250,328 260,320 270,314 282,310 290,303 300,294.7 309,298 318,295 330,292.7 340,295 350,295 358,298 366,313 372,329 378,349 381,362 384,370 392,390 400,405 410,420 420,444 430,465 438,476 446,482.6 469,483.8 477,490 493,497.8 500,488 509,468 517,440 524,418 532,403.5 542,393.5 548,391 557,387 566,374 576,364 590,349 602,341 618,337 630,336 642,333 654,332 662,329 670,331 677,336 685,334 692,336 700,342 709,353 718,359 726,368 733,383 742,394 752,418 765,445 772,443 780,434 796,414 807,404 816,391 828,371 838,359 854,341 862,335 870,332 877,320 888,324 902,328 908,336 926,363 941,364 950,371 955,380 964,391 974,404 990,418 1004,429 1014,434 1026,437 1037,442"/>
<polyline fill="none" stroke="#2F4F4F" stroke-width="2" stroke-linejoin="bevel" points="12,369 109.5,167.6 149.2,419 221.3,171 381.4,657.8 517.4,143.6 757.5,601 885.6,138.4 909.5,516.8"/>
<line x1="381.4" y1="657.8" x2="1222" y2="533.3" stroke="#800000" stroke-width="2.4"/>
<path d="M1097.3999999999999 207.7H1104.2V220.5H1108.0L1100.8 227.3L1093.6 220.5H1097.3999999999999Z" fill="#fff" stroke="#FF0000" stroke-width="1.8" stroke-linejoin="miter"/>
<path d="M1073.3999999999999 333.5H1080.2V347.3H1084.0L1076.8 354.1L1069.6 347.3H1073.3999999999999Z" fill="#fff" stroke="#FF0000" stroke-width="1.8" stroke-linejoin="miter"/>
<path d="M1092.7 561.3L1099.9 569H1096.1000000000001V581.8H1089.3V569H1085.5Z" fill="#fff" stroke="#FF0000" stroke-width="1.8" stroke-linejoin="miter"/>
<path d="M1100.8 605.6L1108.0 612.8H1104.2V625.8H1097.3999999999999V612.8H1093.6Z" fill="#fff" stroke="#FF0000" stroke-width="1.8" stroke-linejoin="miter"/>
<path d="M1049.500 110h10l-5 5z" fill="#A9A9A9"/>
</g>
<path d="M16 116h7l-3.5 4z" fill="#000"/>
<text x="28.6" y="121" font-size="10.2" fill="#000" text-anchor="start" font-weight="normal" textLength="58.5" lengthAdjust="spacingAndGlyphs"  stroke="#000" stroke-width="0.2">EURUSDh,H1</text>
<text x="93.3" y="121" font-size="10.2" fill="#000" text-anchor="start" font-weight="normal" textLength="140.7" lengthAdjust="spacingAndGlyphs"  stroke="#000" stroke-width="0.2">1.13651 1.13674 1.13651 1.13660</text>
<g id="price-axis">
<rect x="1318" y="129" width="3" height="1" fill="#000" shape-rendering="crispEdges"/>
<text x="1323.5" y="133" font-size="10.2" fill="#000" text-anchor="start" font-weight="normal" textLength="33" lengthAdjust="spacingAndGlyphs"  stroke="#000" stroke-width="0.2">1.14510</text>
<rect x="1318" y="163" width="3" height="1" fill="#000" shape-rendering="crispEdges"/>
<text x="1323.5" y="167" font-size="10.2" fill="#000" text-anchor="start" font-weight="normal" textLength="33" lengthAdjust="spacingAndGlyphs"  stroke="#000" stroke-width="0.2">1.14425</text>
<rect x="1318" y="197" width="3" height="1" fill="#000" shape-rendering="crispEdges"/>
<text x="1323.5" y="201" font-size="10.2" fill="#000" text-anchor="start" font-weight="normal" textLength="33" lengthAdjust="spacingAndGlyphs"  stroke="#000" stroke-width="0.2">1.14340</text>
<rect x="1318" y="230" width="3" height="1" fill="#000" shape-rendering="crispEdges"/>
<text x="1323.5" y="234" font-size="10.2" fill="#000" text-anchor="start" font-weight="normal" textLength="33" lengthAdjust="spacingAndGlyphs"  stroke="#000" stroke-width="0.2">1.14255</text>
<rect x="1318" y="264" width="3" height="1" fill="#000" shape-rendering="crispEdges"/>
<text x="1323.5" y="268" font-size="10.2" fill="#000" text-anchor="start" font-weight="normal" textLength="33" lengthAdjust="spacingAndGlyphs"  stroke="#000" stroke-width="0.2">1.14170</text>
<rect x="1318" y="298" width="3" height="1" fill="#000" shape-rendering="crispEdges"/>
<text x="1323.5" y="302" font-size="10.2" fill="#000" text-anchor="start" font-weight="normal" textLength="33" lengthAdjust="spacingAndGlyphs"  stroke="#000" stroke-width="0.2">1.14085</text>
<rect x="1318" y="332" width="3" height="1" fill="#000" shape-rendering="crispEdges"/>
<text x="1323.5" y="336" font-size="10.2" fill="#000" text-anchor="start" font-weight="normal" textLength="33" lengthAdjust="spacingAndGlyphs"  stroke="#000" stroke-width="0.2">1.14000</text>
<rect x="1318" y="366" width="3" height="1" fill="#000" shape-rendering="crispEdges"/>
<text x="1323.5" y="370" font-size="10.2" fill="#000" text-anchor="start" font-weight="normal" textLength="33" lengthAdjust="spacingAndGlyphs"  stroke="#000" stroke-width="0.2">1.13915</text>
<rect x="1318" y="400" width="3" height="1" fill="#000" shape-rendering="crispEdges"/>
<text x="1323.5" y="404" font-size="10.2" fill="#000" text-anchor="start" font-weight="normal" textLength="33" lengthAdjust="spacingAndGlyphs"  stroke="#000" stroke-width="0.2">1.13830</text>
<rect x="1318" y="433" width="3" height="1" fill="#000" shape-rendering="crispEdges"/>
<text x="1323.5" y="437" font-size="10.2" fill="#000" text-anchor="start" font-weight="normal" textLength="33" lengthAdjust="spacingAndGlyphs"  stroke="#000" stroke-width="0.2">1.13745</text>
<rect x="1318" y="467" width="3" height="1" fill="#000" shape-rendering="crispEdges"/>
<text x="1323.5" y="471" font-size="10.2" fill="#000" text-anchor="start" font-weight="normal" textLength="33" lengthAdjust="spacingAndGlyphs"  stroke="#000" stroke-width="0.2">1.13660</text>
<rect x="1318" y="501" width="3" height="1" fill="#000" shape-rendering="crispEdges"/>
<text x="1323.5" y="505" font-size="10.2" fill="#000" text-anchor="start" font-weight="normal" textLength="33" lengthAdjust="spacingAndGlyphs"  stroke="#000" stroke-width="0.2">1.13575</text>
<rect x="1318" y="535" width="3" height="1" fill="#000" shape-rendering="crispEdges"/>
<text x="1323.5" y="539" font-size="10.2" fill="#000" text-anchor="start" font-weight="normal" textLength="33" lengthAdjust="spacingAndGlyphs"  stroke="#000" stroke-width="0.2">1.13490</text>
<rect x="1318" y="569" width="3" height="1" fill="#000" shape-rendering="crispEdges"/>
<text x="1323.5" y="573" font-size="10.2" fill="#000" text-anchor="start" font-weight="normal" textLength="33" lengthAdjust="spacingAndGlyphs"  stroke="#000" stroke-width="0.2">1.13405</text>
<rect x="1318" y="603" width="3" height="1" fill="#000" shape-rendering="crispEdges"/>
<text x="1323.5" y="607" font-size="10.2" fill="#000" text-anchor="start" font-weight="normal" textLength="33" lengthAdjust="spacingAndGlyphs"  stroke="#000" stroke-width="0.2">1.13320</text>
<rect x="1318" y="636" width="3" height="1" fill="#000" shape-rendering="crispEdges"/>
<text x="1323.5" y="640" font-size="10.2" fill="#000" text-anchor="start" font-weight="normal" textLength="33" lengthAdjust="spacingAndGlyphs"  stroke="#000" stroke-width="0.2">1.13235</text>
<rect x="1318" y="670" width="3" height="1" fill="#000" shape-rendering="crispEdges"/>
<text x="1323.5" y="674" font-size="10.2" fill="#000" text-anchor="start" font-weight="normal" textLength="33" lengthAdjust="spacingAndGlyphs"  stroke="#000" stroke-width="0.2">1.13150</text>
<rect x="1319" y="222" width="41" height="10" fill="#0000FF" shape-rendering="crispEdges"/>
<text x="1323.5" y="230" font-size="10.2" fill="#fff" text-anchor="start" font-weight="normal" textLength="33" lengthAdjust="spacingAndGlyphs"  stroke="#fff" stroke-width="0.2">1.14266</text>
<rect x="1319" y="327" width="41" height="10" fill="#0000FF" shape-rendering="crispEdges"/>
<text x="1323.5" y="335" font-size="10.2" fill="#fff" text-anchor="start" font-weight="normal" textLength="33" lengthAdjust="spacingAndGlyphs"  stroke="#fff" stroke-width="0.2">1.14002</text>
<rect x="1319" y="366" width="41" height="10" fill="#FF0000" shape-rendering="crispEdges"/>
<text x="1323.5" y="374" font-size="10.2" fill="#fff" text-anchor="start" font-weight="normal" textLength="33" lengthAdjust="spacingAndGlyphs"  stroke="#fff" stroke-width="0.2">1.13904</text>
<rect x="1319" y="463" width="41" height="10" fill="#000" shape-rendering="crispEdges"/>
<text x="1323.5" y="471" font-size="10.2" fill="#fff" text-anchor="start" font-weight="normal" textLength="33" lengthAdjust="spacingAndGlyphs"  stroke="#fff" stroke-width="0.2">1.13660</text>
<rect x="1319" y="597" width="41" height="10" fill="#0000FF" shape-rendering="crispEdges"/>
<text x="1323.5" y="605" font-size="10.2" fill="#fff" text-anchor="start" font-weight="normal" textLength="33" lengthAdjust="spacingAndGlyphs"  stroke="#fff" stroke-width="0.2">1.13323</text>
</g>
<g id="time-axis">
<rect x="13" y="676" width="1" height="3" fill="#000" shape-rendering="crispEdges"/>
<text x="12.7" y="688" font-size="10.2" fill="#000" text-anchor="start" font-weight="normal" textLength="50.5" lengthAdjust="spacingAndGlyphs"  stroke="#000" stroke-width="0.2">12 Feb 2015</text>
<rect x="77" y="676" width="1" height="3" fill="#000" shape-rendering="crispEdges"/>
<text x="76.7" y="688" font-size="10.2" fill="#000" text-anchor="start" font-weight="normal" textLength="54" lengthAdjust="spacingAndGlyphs"  stroke="#000" stroke-width="0.2">13 Feb 04:00</text>
<rect x="141" y="676" width="1" height="3" fill="#000" shape-rendering="crispEdges"/>
<text x="140.7" y="688" font-size="10.2" fill="#000" text-anchor="start" font-weight="normal" textLength="54" lengthAdjust="spacingAndGlyphs"  stroke="#000" stroke-width="0.2">13 Feb 12:00</text>
<rect x="205" y="676" width="1" height="3" fill="#000" shape-rendering="crispEdges"/>
<text x="204.7" y="688" font-size="10.2" fill="#000" text-anchor="start" font-weight="normal" textLength="54" lengthAdjust="spacingAndGlyphs"  stroke="#000" stroke-width="0.2">13 Feb 20:00</text>
<rect x="269" y="676" width="1" height="3" fill="#000" shape-rendering="crispEdges"/>
<text x="268.7" y="688" font-size="10.2" fill="#000" text-anchor="start" font-weight="normal" textLength="54" lengthAdjust="spacingAndGlyphs"  stroke="#000" stroke-width="0.2">16 Feb 04:00</text>
<rect x="333" y="676" width="1" height="3" fill="#000" shape-rendering="crispEdges"/>
<text x="332.7" y="688" font-size="10.2" fill="#000" text-anchor="start" font-weight="normal" textLength="54" lengthAdjust="spacingAndGlyphs"  stroke="#000" stroke-width="0.2">16 Feb 12:00</text>
<rect x="397" y="676" width="1" height="3" fill="#000" shape-rendering="crispEdges"/>
<text x="396.7" y="688" font-size="10.2" fill="#000" text-anchor="start" font-weight="normal" textLength="54" lengthAdjust="spacingAndGlyphs"  stroke="#000" stroke-width="0.2">16 Feb 20:00</text>
<rect x="461" y="676" width="1" height="3" fill="#000" shape-rendering="crispEdges"/>
<text x="460.7" y="688" font-size="10.2" fill="#000" text-anchor="start" font-weight="normal" textLength="54" lengthAdjust="spacingAndGlyphs"  stroke="#000" stroke-width="0.2">17 Feb 04:00</text>
<rect x="525" y="676" width="1" height="3" fill="#000" shape-rendering="crispEdges"/>
<text x="524.7" y="688" font-size="10.2" fill="#000" text-anchor="start" font-weight="normal" textLength="54" lengthAdjust="spacingAndGlyphs"  stroke="#000" stroke-width="0.2">17 Feb 12:00</text>
<rect x="589" y="676" width="1" height="3" fill="#000" shape-rendering="crispEdges"/>
<text x="588.7" y="688" font-size="10.2" fill="#000" text-anchor="start" font-weight="normal" textLength="54" lengthAdjust="spacingAndGlyphs"  stroke="#000" stroke-width="0.2">17 Feb 20:00</text>
<rect x="653" y="676" width="1" height="3" fill="#000" shape-rendering="crispEdges"/>
<text x="652.7" y="688" font-size="10.2" fill="#000" text-anchor="start" font-weight="normal" textLength="54" lengthAdjust="spacingAndGlyphs"  stroke="#000" stroke-width="0.2">18 Feb 04:00</text>
<rect x="717" y="676" width="1" height="3" fill="#000" shape-rendering="crispEdges"/>
<text x="716.7" y="688" font-size="10.2" fill="#000" text-anchor="start" font-weight="normal" textLength="54" lengthAdjust="spacingAndGlyphs"  stroke="#000" stroke-width="0.2">18 Feb 12:00</text>
<rect x="781" y="676" width="1" height="3" fill="#000" shape-rendering="crispEdges"/>
<text x="780.7" y="688" font-size="10.2" fill="#000" text-anchor="start" font-weight="normal" textLength="54" lengthAdjust="spacingAndGlyphs"  stroke="#000" stroke-width="0.2">18 Feb 20:00</text>
<rect x="845" y="676" width="1" height="3" fill="#000" shape-rendering="crispEdges"/>
<text x="844.7" y="688" font-size="10.2" fill="#000" text-anchor="start" font-weight="normal" textLength="54" lengthAdjust="spacingAndGlyphs"  stroke="#000" stroke-width="0.2">19 Feb 04:00</text>
<rect x="909" y="676" width="1" height="3" fill="#000" shape-rendering="crispEdges"/>
<text x="908.7" y="688" font-size="10.2" fill="#000" text-anchor="start" font-weight="normal" textLength="54" lengthAdjust="spacingAndGlyphs"  stroke="#000" stroke-width="0.2">19 Feb 12:00</text>
<rect x="973" y="676" width="1" height="3" fill="#000" shape-rendering="crispEdges"/>
<text x="972.7" y="688" font-size="10.2" fill="#000" text-anchor="start" font-weight="normal" textLength="54" lengthAdjust="spacingAndGlyphs"  stroke="#000" stroke-width="0.2">19 Feb 20:00</text>
<rect x="1037" y="676" width="1" height="3" fill="#000" shape-rendering="crispEdges"/>
<text x="1036.7" y="688" font-size="10.2" fill="#000" text-anchor="start" font-weight="normal" textLength="54" lengthAdjust="spacingAndGlyphs"  stroke="#000" stroke-width="0.2">20 Feb 04:00</text>
</g>
</g>
<g id="chart-tabs">
<g shape-rendering="crispEdges">
<rect x="8" y="695" width="1354" height="41" fill="#F0F0F0" />
<rect x="8" y="694" width="1354" height="1" fill="#E3E3E3" />
<rect x="8" y="695" width="1354" height="1" fill="#000" />
<rect x="9" y="696" width="1" height="18" fill="#A0A0A0" />
<rect x="10" y="696" width="1" height="18" fill="#696969" />
<rect x="12" y="695" width="85" height="19" fill="#fff" />
<rect x="12" y="695" width="1" height="19" fill="#000" />
<rect x="96" y="695" width="1" height="19" fill="#000" />
<rect x="12" y="713" width="85" height="1" fill="#000" />
<rect x="13" y="695" width="83" height="1" fill="#fff" />
<rect x="8" y="715" width="1354" height="1" fill="#fff" />
</g>
<text x="21.5" y="708" font-size="10.4" fill="#000" text-anchor="start" font-weight="normal" textLength="63.2" lengthAdjust="spacingAndGlyphs" stroke="#000" stroke-width="0.1">EURUSDh,H1</text>
<text x="106" y="708" font-size="10.4" fill="#6a6a6a" text-anchor="start" font-weight="normal" textLength="62.6" lengthAdjust="spacingAndGlyphs" stroke="#6a6a6a" stroke-width="0.1">GBPUSDh,H1</text>
<text x="191" y="708" font-size="10.4" fill="#6a6a6a" text-anchor="start" font-weight="normal" textLength="61" lengthAdjust="spacingAndGlyphs" stroke="#6a6a6a" stroke-width="0.1">EURJPYh,H4</text>
<text x="274.4" y="708" font-size="10.4" fill="#6a6a6a" text-anchor="start" font-weight="normal" textLength="62.6" lengthAdjust="spacingAndGlyphs" stroke="#6a6a6a" stroke-width="0.1">GBPCHFh,H4</text>
<text x="359" y="708" font-size="10.4" fill="#6a6a6a" text-anchor="start" font-weight="normal" textLength="73" lengthAdjust="spacingAndGlyphs" stroke="#6a6a6a" stroke-width="0.1">AUDUSDh,Daily</text>
<text x="454" y="708" font-size="10.4" fill="#6a6a6a" text-anchor="start" font-weight="normal" textLength="69.8" lengthAdjust="spacingAndGlyphs" stroke="#6a6a6a" stroke-width="0.1">GBPJPYh,Daily</text>
<text x="546" y="708" font-size="10.4" fill="#6a6a6a" text-anchor="start" font-weight="normal" textLength="63.6" lengthAdjust="spacingAndGlyphs" stroke="#6a6a6a" stroke-width="0.1">EURGBPh,H4</text>
<text x="629.5" y="708" font-size="10.4" fill="#6a6a6a" text-anchor="start" font-weight="normal" textLength="63.0" lengthAdjust="spacingAndGlyphs" stroke="#6a6a6a" stroke-width="0.1">USDCHFh,H4</text>
<text x="715" y="708" font-size="10.4" fill="#6a6a6a" text-anchor="start" font-weight="normal" textLength="60.7" lengthAdjust="spacingAndGlyphs" stroke="#6a6a6a" stroke-width="0.1">USDJPYh,H4</text>
<text x="798.5" y="708" font-size="10.4" fill="#6a6a6a" text-anchor="start" font-weight="normal" textLength="73.5" lengthAdjust="spacingAndGlyphs" stroke="#6a6a6a" stroke-width="0.1">AUDNZDh,Daily</text>
<text x="894.2" y="708" font-size="10.4" fill="#6a6a6a" text-anchor="start" font-weight="normal" textLength="73.0" lengthAdjust="spacingAndGlyphs" stroke="#6a6a6a" stroke-width="0.1">XAUUSDh,Daily</text>
<text x="990.5" y="708" font-size="10.4" fill="#6a6a6a" text-anchor="start" font-weight="normal" textLength="73.8" lengthAdjust="spacingAndGlyphs" stroke="#6a6a6a" stroke-width="0.1">USDCADh,Daily</text>
<text x="1086.3" y="708" font-size="10.4" fill="#6a6a6a" text-anchor="start" font-weight="normal" textLength="73.2" lengthAdjust="spacingAndGlyphs" stroke="#6a6a6a" stroke-width="0.1">NZDUSDh,Daily</text>
<rect x="179" y="699" width="1" height="12" fill="#7a7a7a" shape-rendering="crispEdges"/>
<rect x="264" y="699" width="1" height="12" fill="#7a7a7a" shape-rendering="crispEdges"/>
<rect x="348" y="699" width="1" height="12" fill="#7a7a7a" shape-rendering="crispEdges"/>
<rect x="444" y="699" width="1" height="12" fill="#7a7a7a" shape-rendering="crispEdges"/>
<rect x="535" y="699" width="1" height="12" fill="#7a7a7a" shape-rendering="crispEdges"/>
<rect x="620" y="699" width="1" height="12" fill="#7a7a7a" shape-rendering="crispEdges"/>
<rect x="704" y="699" width="1" height="12" fill="#7a7a7a" shape-rendering="crispEdges"/>
<rect x="788" y="699" width="1" height="12" fill="#7a7a7a" shape-rendering="crispEdges"/>
<rect x="884" y="699" width="1" height="12" fill="#7a7a7a" shape-rendering="crispEdges"/>
<rect x="980" y="699" width="1" height="12" fill="#7a7a7a" shape-rendering="crispEdges"/>
<rect x="1076" y="699" width="1" height="12" fill="#7a7a7a" shape-rendering="crispEdges"/>
<rect x="1172" y="699" width="1" height="12" fill="#7a7a7a" shape-rendering="crispEdges"/>
<path d="M1337 701.500l-3.200 3.500 3.200 3.500zM1350.500 701.500l3.200 3.500-3.200 3.500z" fill="#A8A8A8"/>
</g>
<g id="statusbar">
<text x="10.3" y="731" font-size="11.5" fill="#000" text-anchor="start" font-weight="normal" textLength="134.5" lengthAdjust="spacingAndGlyphs"  stroke="#000" stroke-width="0.22">Для справки, нажмите F1</text>
<text x="642" y="731" font-size="11" fill="#000" text-anchor="start" font-weight="normal" textLength="37.5" lengthAdjust="spacingAndGlyphs"  stroke="#000" stroke-width="0.22">Default</text>
<rect x="637" y="719" width="1" height="16" fill="#A0A0A0" shape-rendering="crispEdges"/>
<rect x="638" y="719" width="1" height="16" fill="#fff" shape-rendering="crispEdges"/>
<rect x="752" y="719" width="1" height="16" fill="#A0A0A0" shape-rendering="crispEdges"/>
<rect x="753" y="719" width="1" height="16" fill="#fff" shape-rendering="crispEdges"/>
<rect x="854" y="719" width="1" height="16" fill="#A0A0A0" shape-rendering="crispEdges"/>
<rect x="855" y="719" width="1" height="16" fill="#fff" shape-rendering="crispEdges"/>
<rect x="925" y="719" width="1" height="16" fill="#A0A0A0" shape-rendering="crispEdges"/>
<rect x="926" y="719" width="1" height="16" fill="#fff" shape-rendering="crispEdges"/>
<rect x="996" y="719" width="1" height="16" fill="#A0A0A0" shape-rendering="crispEdges"/>
<rect x="997" y="719" width="1" height="16" fill="#fff" shape-rendering="crispEdges"/>
<rect x="1064" y="719" width="1" height="16" fill="#A0A0A0" shape-rendering="crispEdges"/>
<rect x="1065" y="719" width="1" height="16" fill="#fff" shape-rendering="crispEdges"/>
<rect x="1134" y="719" width="1" height="16" fill="#A0A0A0" shape-rendering="crispEdges"/>
<rect x="1135" y="719" width="1" height="16" fill="#fff" shape-rendering="crispEdges"/>
<rect x="1200" y="719" width="1" height="16" fill="#A0A0A0" shape-rendering="crispEdges"/>
<rect x="1201" y="719" width="1" height="16" fill="#fff" shape-rendering="crispEdges"/>
<g shape-rendering="crispEdges">
<rect x="1206" y="721" width="2" height="10.0" fill="#5E8C00" />
<rect x="1206" y="731.0" width="2" height="2.0" fill="#B01010" />
<rect x="1209" y="721" width="2" height="9.0" fill="#5E8C00" />
<rect x="1209" y="730.0" width="2" height="3.0" fill="#B01010" />
<rect x="1212" y="721" width="2" height="8.0" fill="#5E8C00" />
<rect x="1212" y="729.0" width="2" height="4.0" fill="#B01010" />
<rect x="1215" y="721" width="2" height="7.0" fill="#5E8C00" />
<rect x="1215" y="728.0" width="2" height="5.0" fill="#B01010" />
<rect x="1218" y="721" width="2" height="6.0" fill="#5E8C00" />
<rect x="1218" y="727.0" width="2" height="6.0" fill="#B01010" />
<rect x="1221" y="721" width="2" height="5.0" fill="#A3BE70" />
<rect x="1221" y="726.0" width="2" height="7.0" fill="#B01010" />
<rect x="1224" y="721" width="2" height="4.0" fill="#A3BE70" />
<rect x="1224" y="725.0" width="2" height="8.0" fill="#B01010" />
<rect x="1227" y="721" width="2" height="3.0" fill="#A3BE70" />
<rect x="1227" y="724.0" width="2" height="9.0" fill="#B01010" />
</g>
<text x="1257.5" y="731" font-size="11.5" fill="#000" text-anchor="start" font-weight="normal" textLength="60.7" lengthAdjust="spacingAndGlyphs"  stroke="#000" stroke-width="0.22">28330/34 kb</text>
<path d="M1362 720l-16 16M1362 725l-11 11M1362 730l-6 6" stroke="#A6A6A6" stroke-width="1.3"/>
</g>
<g id="taskbar">
<rect x="0" y="728" width="1366" height="16" fill="#7A3842" fill-opacity="0.58" shape-rendering="crispEdges"/>
<rect x="0" y="728" width="1366" height="1" fill="#000" fill-opacity="0.09" shape-rendering="crispEdges"/>
<rect x="0" y="743" width="1366" height="1" fill="#000" fill-opacity="0.12" shape-rendering="crispEdges"/>
<rect x="176" y="729.5" width="58" height="15" fill="#fff" fill-opacity="0.22" stroke="#fff" stroke-opacity="0.35" stroke-width="1"/>
<rect x="424" y="729.5" width="58" height="15" fill="#fff" fill-opacity="0.18" stroke="#fff" stroke-opacity="0.35" stroke-width="1"/>
<rect x="485.5" y="729.5" width="58.5" height="15" fill="#fff" fill-opacity="0.18" stroke="#fff" stroke-opacity="0.35" stroke-width="1"/>
<rect x="547.5" y="729.5" width="58.0" height="15" fill="#fff" fill-opacity="0.32" stroke="#fff" stroke-opacity="0.35" stroke-width="1"/>
<rect x="609" y="729.5" width="58.5" height="15" fill="#fff" fill-opacity="0.18" stroke="#fff" stroke-opacity="0.35" stroke-width="1"/>
<rect x="671" y="729.5" width="59.5" height="15" fill="#fff" fill-opacity="0.2" stroke="#fff" stroke-opacity="0.35" stroke-width="1"/>
<path d="M12 737.500l11.500-1.800v8.300h-11.500zM25 735.500l13-2v10.500h-13z" fill="#fff"/>
<rect x="66.5" y="733" width="29.5" height="11" fill="#0D8A0D" />
<path d="M76 744v-4h11v4M79 740c0-4 5-4 5 0" stroke="#fff" stroke-width="1.600" fill="none"/>
<path d="M127.500 737.500l17-2.500v9h-17z" fill="#2B579A"/>
<rect x="145" y="737.5" width="12.5" height="6.5" fill="#fff" stroke="#2B579A" stroke-width="1"/>
<path d="M147 740h9M147 742.500h9" stroke="#2B579A" stroke-width="1"/>
<circle cx="205" cy="750" r="15" fill="#DE4A3C"/>
<path d="M251 744v-9l4-2.500h17l8 11.500z" fill="#C9DDF2"/>
<path d="M262 744a4 4 0 0 1 8 0z" fill="#3F7FD0"/>
<path d="M313 744v-8l3-3h21l6 6v5z" fill="#F4F4F4"/>
<text x="322" y="747" font-size="13" fill="#E52620" text-anchor="start" font-weight="bold"  stroke="#E52620" stroke-width="0.22">Я</text>
<path d="M376 744a15 13 0 0 1 30 0z" fill="#F6F6F6"/>
<path d="M380 736l10 8M401 735l-9 9" stroke="#E01E1E" stroke-width="3"/>
<path d="M438 744a14 12 0 0 1 28 0z" fill="#12A5F4"/>
<path d="M448 744a4.500 4 0 0 1 8 0" stroke="#fff" stroke-width="2" fill="none"/>
<path d="M505 744c0-8 6-13 12-12 6 1 9 6 9 12z" fill="#2A62C9"/>
<path d="M505 744c0-8 5-13 11-12-3 3-3 8 0 12z" fill="#F59A23"/>
<path d="M560 744a15.500 12 0 0 1 31 0z" fill="#A3241B"/>
<path d="M568 744l2-4" stroke="#fff" stroke-width="1.500"/>
<path d="M625 744a14 11 0 0 1 28 0z" fill="#F3A545"/>
<path d="M630 741h18" stroke="#FBE3C0" stroke-width="2"/>
<rect x="686" y="733.5" width="18" height="11" fill="#E9F1FB" stroke="#3F8BE0" stroke-width="1.300"/>
<rect x="693" y="738.5" width="18" height="6" fill="#E9F1FB" stroke="#3F8BE0" stroke-width="1.300"/>
<circle cx="690" cy="745" r="4" fill="#F59A23"/>
<path d="M1159 744l2-2 2 2z" fill="#fff"/>
<rect x="1176" y="742" width="15" height="2" fill="#E8E8E8" />
<rect x="1201" y="742" width="4" height="2" fill="#fff" />
<rect x="1206" y="741.5" width="8" height="2.5" fill="#fff" />
<rect x="1225" y="742" width="13" height="2" fill="#fff" />
<clipPath id="tb"><rect x="0" y="728" width="1366" height="16"/></clipPath>
<g clip-path="url(#tb)"><text x="1311" y="745.2" font-size="13" fill="#fff" text-anchor="start" font-weight="normal" textLength="20.5" lengthAdjust="spacingAndGlyphs"  stroke="#fff" stroke-width="0.22">7:08</text></g>
</g>
</svg></body></html>
